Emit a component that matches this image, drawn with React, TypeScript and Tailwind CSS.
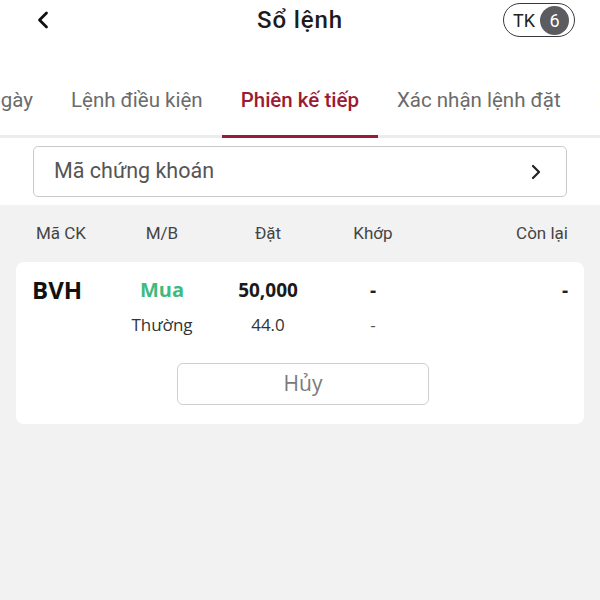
import { ChevronLeft, ChevronRight } from "lucide-react";

const tabs = ["Lệnh điều kiện", "Phiên kế tiếp", "Xác nhận lệnh đặt", "Lệnh chờ"];
const cols = "grid grid-cols-[78px_104px_108px_102px_1fr] items-center";

export default function App() {
  return (
    <div className="w-[600px] h-[600px] overflow-hidden bg-white flex flex-col font-['Roboto',sans-serif]">
      {/* header */}
      <div className="h-[40px] grid grid-cols-[1fr_auto_1fr] items-center">
        <div className="pl-[29px] flex items-center">
          <ChevronLeft className="w-[28px] h-[28px] text-[#111]" strokeWidth={2.4} />
        </div>
        <div className="text-[24px] font-medium tracking-[0.9px] text-[#1c1c1c]">Sổ lệnh</div>
        <div className="flex justify-end pr-[25px]">
          <div className="h-[34px] w-[72px] rounded-full border-[1.5px] border-[#3a3a3a] flex items-center pl-[9px] gap-[5px]">
            <span className="text-[18px] text-[#222]">TK</span>
            <span className="w-[29px] h-[29px] rounded-full bg-[#5b5b60] text-white text-[18px] flex items-center justify-center">6</span>
          </div>
        </div>
      </div>

      {/* tabs */}
      <div className="mt-[26px] flex border-b-[3px] border-[#ececec] text-[20.5px]">
        <div className="w-[52px] h-[72px] -mb-[3px] border-b-[3px] border-transparent overflow-hidden flex justify-end items-center shrink-0">
          <span className="whitespace-nowrap pr-[19px] text-[#6b6b6b]">Trong ngày</span>
        </div>
        {tabs.map((t) => {
          const active = t === "Phiên kế tiếp";
          return (
            <div
              key={t}
              className={
                active
                  ? "h-[72px] -mb-[3px] px-[19px] border-b-[3px] border-[#9b1b33] flex items-center whitespace-nowrap shrink-0 text-[#9b1b33] font-medium"
                  : "h-[72px] -mb-[3px] px-[19px] border-b-[3px] border-transparent flex items-center whitespace-nowrap shrink-0 text-[#6b6b6b]"
              }
            >
              {t}
            </div>
          );
        })}
      </div>

      {/* search */}
      <div className="mt-[8px] mx-[33px] h-[51px] border border-[#c9c9c9] rounded-[5px] flex items-center justify-between pl-[20px] pr-[18px]">
        <span className="text-[21.5px] text-[#555]">Mã chứng khoán</span>
        <ChevronRight className="w-[24px] h-[24px] text-[#222]" strokeWidth={2.2} />
      </div>

      {/* list */}
      <div className="mt-[8px] flex-1 bg-[#f2f2f2] px-[16px]">
        <div className={`${cols} h-[57px] px-[16px] text-[17px] text-[#444]`}>
          <span className="pl-[4px]">Mã CK</span>
          <span className="text-center">M/B</span>
          <span className="text-center">Đặt</span>
          <span className="text-center">Khớp</span>
          <span className="text-right">Còn lại</span>
        </div>

        <div className="bg-white rounded-[8px] px-[16px] pt-[10px] pb-[19px] font-['Open_Sans',sans-serif]">
          <div className={`${cols} h-[28px]`}>
            <span className="text-[24px] font-bold text-[#111]">BVH</span>
            <span className="text-center text-[20px] font-bold text-[#3fba7f]">Mua</span>
            <span className="text-center text-[19px] font-bold text-[#1a1a1a]">50,000</span>
            <span className="text-center text-[19px] font-bold text-[#222]">-</span>
            <span className="text-right text-[19px] font-bold text-[#222]">-</span>
          </div>
          <div className={`${cols} h-[24px] mt-[12px] text-[17px] text-[#333]`}>
            <span />
            <span className="text-center">Thường</span>
            <span className="text-center">44.0</span>
            <span className="text-center text-[#555]">-</span>
            <span />
          </div>
          <div className="mt-[27px] flex justify-center pl-[6px]">
            <div className="w-[252px] h-[42px] border-[1.5px] border-[#cfcfcf] rounded-[6px] flex items-center justify-center text-[21px] text-[#7a7a7a]">
              Hủy
            </div>
          </div>
        </div>
      </div>
    </div>
  );
}
